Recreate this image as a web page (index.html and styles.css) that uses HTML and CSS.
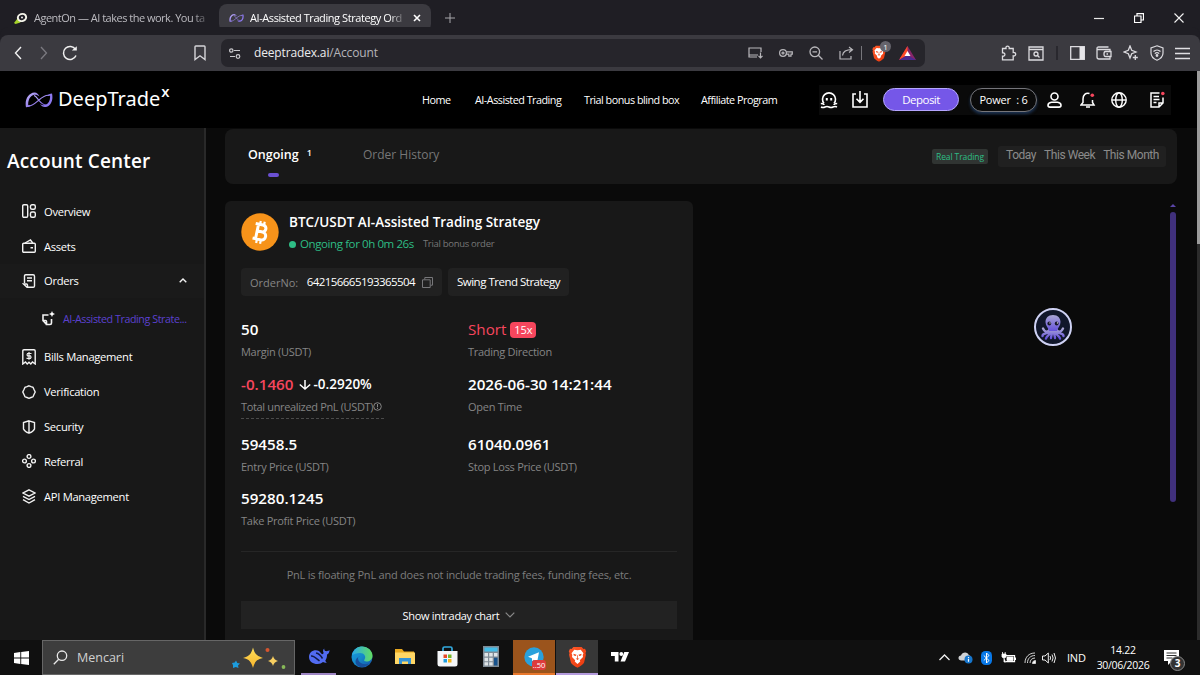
FILE: index.html
```
<!DOCTYPE html>
<html lang="en">

<head>
  <meta charset="UTF-8">
  <meta name="viewport" content="width=device-width, initial-scale=1.0">
  <title>AI-Assisted Trading Strategy Orders</title>
  <link rel="stylesheet" href="styles.css">
</head>

<body>
  <svg width="0" height="0" class="defs">
    <defs>
      <linearGradient id="loop" x1="0" y1="0" x2="1" y2="1">
        <stop offset="0" stop-color="#c9bcff" />
        <stop offset="1" stop-color="#6c50d8" />
      </linearGradient>
      <linearGradient id="edge" x1="0" y1="0" x2="1" y2="1">
        <stop offset="0" stop-color="#1b9de2" />
        <stop offset=".5" stop-color="#1489c9" />
        <stop offset="1" stop-color="#1650a8" />
      </linearGradient>
      <linearGradient id="edge-top" x1="0" y1="0" x2="1" y2="0">
        <stop offset="0" stop-color="#2aa9e8" />
        <stop offset="1" stop-color="#62dd62" />
      </linearGradient>
      <linearGradient id="brave" x1="0" y1="0" x2="1" y2="1">
        <stop offset="0" stop-color="#ff5a2a" />
        <stop offset="1" stop-color="#e9380c" />
      </linearGradient>
      <linearGradient id="gold" x1="0" y1="0" x2="0" y2="1">
        <stop offset="0" stop-color="#ffdf5a" />
        <stop offset="1" stop-color="#f7b42c" />
      </linearGradient>
      <linearGradient id="octo" x1="0" y1="0" x2="0" y2="1">
        <stop offset="0" stop-color="#aaa6d4" />
        <stop offset="1" stop-color="#6552dc" />
      </linearGradient>
      <symbol id="infinity" viewBox="0 0 28 16">
        <path d="M3 14C7 14.500 10.500 11 14 8s7.500-5.500 10.500-4.500M9 3.500C11 4 12 6 14 8.500s4.500 4.500 7.500 4.500" fill="none" stroke="url(#loop)" stroke-width="1.200" />
        <path d="M1 15.200C-.5 8 3 1 9.500.5 12 .5 13.500 2.500 14.500 4.500 12.500 2.800 10.500 2.500 8.500 3 5 4 3 8 3.200 13.300l3-.3C5 14.500 3 15.300 1 15.200z" fill="url(#loop)" />
        <path d="M27 1.500C28.500 8 26 14 20.500 15c-2.500.3-4-1.200-5.500-3 2 1.300 4 1.500 5.800.8C24 11.500 25.500 7.500 25 3.500L21.500 4C23 2.500 25 1.500 27 1.500z" fill="#8d79ef" />
      </symbol>
      <symbol id="lion" viewBox="0 0 20 24">
        <path d="M5.500 1h9l2 2.200 1.700-.2 1.300 3-.8 1.500.5 2-2 8.500c-.3 1.500-4.800 4.500-7.200 5.700C7.600 22.500 3.100 19.500 2.800 18L.8 9.500l.5-2L.5 6l1.300-3 1.700.2z" fill="url(#brave)" />
        <path d="M10 4.500 13.500 4l3 3.800-.8 2 .3 2.200-3.500 3.500.5 1.500L10 19.500 7 17l.5-1.500L4 12l.3-2.200-.8-2L6.500 4z" fill="#fff" />
        <path d="M5.500 8.500 9 9.500 8 11l-2-.7zM14.500 8.500 11 9.500l1 1.500 2-.7zM8 13.500h4l-2 1.800zM9.600 10h.8v4h-.8z" fill="#f04a1c" />
      </symbol>
    </defs>
  </svg>

  <!-- Browser tabs -->
  <div class="tab-strip">
    <div class="tab tab-idle">
      <svg class="tab-icon" width="15" height="14" viewBox="0 0 15 14"><path d="M1 12 4.500 7.500l3 4-5 1.500z" fill="#a7d42a" /><ellipse cx="9" cy="6.500" rx="4.200" ry="3.500" fill="none" stroke="#f4f4ea" stroke-width="2" transform="rotate(-18 9 6.500)" /><circle cx="9" cy="6.500" r="1" fill="#eee" /></svg>
      <span class="tab-text fade">AgentOn — AI takes the work. You ta</span>
    </div>
    <div class="tab tab-active">
      <svg class="tab-icon" width="15" height="10"><use href="#infinity" /></svg>
      <span class="tab-text fade">AI-Assisted Trading Strategy Ord</span>
      <svg class="tab-close" width="8" height="8" viewBox="0 0 8 8"><path d="m1 1 6 6M7 1 1 7" stroke="#fff" stroke-width="1.600" /></svg>
    </div>
    <svg class="tab-new" width="10" height="10" viewBox="0 0 10 10"><path d="M5 0v10M0 5h10" stroke="#a8a7ab" /></svg>
    <div class="window-buttons">
      <svg width="10" height="10" viewBox="0 0 10 10"><path d="M0 5.500h10" stroke="#e8e8e8" stroke-width="1.200" /></svg>
      <svg width="10" height="10" viewBox="0 0 10 10"><path d="M.5 3h6.500v6.500H.5zM3 3V.6h6.500V7H7" fill="none" stroke="#fff" stroke-width="1.200" /></svg>
      <svg width="10" height="10" viewBox="0 0 10 10"><path d="m.5.5 9 9M9.500.5l-9 9" stroke="#f3f3f3" stroke-width="1.100" /></svg>
    </div>
  </div>

  <!-- Browser toolbar -->
  <div class="toolbar">
    <svg class="nav-back" width="8" height="14" viewBox="0 0 8 14"><path d="M7 1 1.500 7 7 13" fill="none" stroke="#f2f2f2" stroke-width="1.400" /></svg>
    <svg class="nav-next" width="8" height="14" viewBox="0 0 8 14"><path d="m1 1 5.500 6L1 13" fill="none" stroke="#7b7a80" stroke-width="1.300" /></svg>
    <svg class="nav-reload" width="16" height="16" viewBox="0 0 16 16"><path d="M14 10.500A6.500 6.500 0 1 1 13.500 4.500" fill="none" stroke="#f0f0f0" stroke-width="1.500" /><path d="M9.800 5.500h5V1.200z" fill="#f0f0f0" /></svg>
    <svg class="nav-bookmark" width="12" height="16" viewBox="0 0 12 16"><path d="M1 1.800Q1 1 1.800 1h8.400q.8 0 .8.800V14.500L6 10.800 1 14.500z" fill="none" stroke="#d6d5d9" stroke-width="1.400" /></svg>
    <div class="address-bar">
      <svg width="12" height="11" viewBox="0 0 12 11" fill="none" stroke="#c9c8cc" stroke-width="1.200"><circle cx="2.300" cy="2.500" r="1.700" /><path d="M5 2.500h6M1 8.500h5" /><circle cx="9" cy="8.500" r="1.800" /></svg>
      <span class="url">deeptradex.ai<i>/Account</i></span>
      <div class="address-icons">
        <svg width="15" height="12" viewBox="0 0 15 12" fill="none" stroke="#b8b7bb" stroke-width="1.200"><path d="M13 5V1H1v9h8M1 8h9M12.500 5.500v5M10.500 8.800l2 2 2-2" /></svg>
        <svg width="14" height="10" viewBox="0 0 14 10" fill="none" stroke="#b8b7bb" stroke-width="1.200"><circle cx="4" cy="5" r="3.400" /><circle cx="4" cy="5" r="1" /><path d="M7.300 3.800H13.300v2.400h-1.300v2H9.800v-2H7.300" /></svg>
        <svg width="14" height="14" viewBox="0 0 14 14" fill="none" stroke="#b8b7bb" stroke-width="1.300"><circle cx="5.800" cy="5.800" r="4.800" /><path d="m9.300 9.300 4.200 4.200M3.500 5.800h4.600" /></svg>
        <svg width="15" height="14" viewBox="0 0 15 14" fill="none" stroke="#b8b7bb" stroke-width="1.200"><path d="M1 5v8h11v-3M3.500 9.500C4 5.500 7 3.700 13 3.700M10 1l3.500 2.700L10 6.500" /></svg>
        <span class="bar-split"></span>
        <span class="shield"><svg width="14" height="17"><use href="#lion" /></svg><b>1</b></span>
        <svg width="17" height="14" viewBox="0 0 17 14"><path d="M8.500 0 0 14h17z" fill="#87256b" /><path d="M8.500 0 0 14l8.500-5z" fill="#ff4a25" /><path d="M0 14h17L8.500 9z" fill="#4b2a91" /><path d="M8.500 5 5.500 10h6z" fill="#fff" /></svg>
      </div>
    </div>
    <div class="toolbar-icons">
      <svg width="16" height="16" viewBox="0 0 16 16" fill="none" stroke="#dcdbdf" stroke-width="1.300"><path d="M1.500 3.500H5C4.300.3 8.700.3 8.200 3.500h4v4c3.300-.5 3.300 3.800 0 3.300v4H1.500v-3.600c3.200.4 3.200-3.800 0-3.400z" /></svg>
      <svg width="16" height="15" viewBox="0 0 16 15" fill="none" stroke="#dcdbdf" stroke-width="1.300"><path d="M1 1h14v13H1zM1 3.500h14" /><circle cx="8" cy="8" r="2" /><path d="m9.500 9.500 2 2" /></svg>
      <span class="bar-split dark"></span>
      <svg width="15" height="14" viewBox="0 0 15 14"><path d="M.7.700h13.600v12.600H.7z" fill="none" stroke="#dcdbdf" stroke-width="1.300" /><path d="M9.500 1h5v12h-5z" fill="#e6e5e9" /></svg>
      <svg width="16" height="14" viewBox="0 0 16 14" fill="none" stroke="#dcdbdf" stroke-width="1.300"><path d="M14 5V3.500H2.500c-2 0-2-2.500 0-2.500H12.500M1 2v9q0 2 2 2h11v-2.500M9.500 5.500H15v5H9.500q-1.500 0-1.500-2.500t1.500-2.500zM10.500 8h1.500" /></svg>
      <svg width="16" height="16" viewBox="0 0 16 16" fill="none" stroke="#dcdbdf" stroke-width="1.300"><path d="M7 1 8.700 5.300 13 7 8.700 8.700 7 13 5.300 8.700 1 7 5.300 5.300zM12.300 10v5M9.800 12.500H14.800" /></svg>
      <svg width="14" height="16" viewBox="0 0 14 16" fill="none" stroke="#dcdbdf" stroke-width="1.200"><path d="M7 .8 13 3v5c0 4-3 6-6 7.200C4 14 1 12 1 8V3zM3.500 6.500c2-2 5-2 7 0M4.800 8.600c1.300-1.200 3.100-1.200 4.400 0" /><circle cx="7" cy="10.500" r=".8" fill="#dcdbdf" /></svg>
      <svg width="15" height="13" viewBox="0 0 15 13"><path d="M0 1.500h15M0 6.500h15M0 11.500h15" stroke="#e0dfe3" stroke-width="1.400" /></svg>
    </div>
  </div>

  <div class="viewport">
    <header class="site-header">
      <a class="logo" href="#">
        <svg width="28" height="16"><use href="#infinity" /></svg>
        <span class="logo-name">DeepTrade</span><sup>x</sup>
      </a>
      <nav class="main-nav">
        <a class="nav-home" href="#">Home</a>
        <a class="nav-trading" href="#">AI-Assisted Trading</a>
        <a class="nav-bonus" href="#">Trial bonus blind box</a>
        <a class="nav-affiliate" href="#">Affiliate Program</a>
      </nav>
      <div class="header-actions">
        <svg width="18" height="18" viewBox="0 0 18 18" fill="none" stroke="#fff" stroke-width="1.600"><path d="M4 12.500A6.500 6.500 0 1 1 14 12.500M.8 12.500c1.500 0 3 .2 3.200 1.500M17.200 12.500c-1.500 0-3 .2-3.200 1.500M1 16q2 1 4 0t4 0 4 0 4 0" /><path d="M6.800 7v2.500M11.200 7v2.500" stroke-width="2" /></svg>
        <svg class="download" width="16" height="17" viewBox="0 0 16 17" fill="none" stroke="#fff" stroke-width="1.600"><path d="M4 3H1v13h14V3h-3M8 0v11M4.500 7.800 8 11.300l3.500-3.500" /></svg>
        <button class="btn-deposit">Deposit</button>
        <button class="btn-power">Power&nbsp; : 6</button>
        <svg class="user" width="15" height="16" viewBox="0 0 15 16" fill="none" stroke="#fff" stroke-width="1.600"><circle cx="7.500" cy="4.500" r="3.500" /><path d="M4.500 10.300h6Q14 10.800 14 13.300q0 1.800-2 1.800H3q-2 0-2-1.800 0-2.500 3.500-3z" /></svg>
        <svg class="bell" width="16" height="16" viewBox="0 0 16 16" fill="none" stroke="#fff" stroke-width="1.500"><path d="M9.500 1.500C5.500.5 3 3 3 7v3.500L1 13h13l-1.500-2.500V8M6 15h4" /><circle cx="12.300" cy="3.200" r="1.800" fill="#f6465d" stroke="none" /></svg>
        <svg width="16" height="16" viewBox="0 0 16 16" fill="none" stroke="#fff" stroke-width="1.400"><circle cx="8" cy="8" r="7.200" /><ellipse cx="8" cy="8" rx="3.300" ry="7.200" /><path d="M1 8h14" /></svg>
        <svg width="15" height="18" viewBox="0 0 15 18" fill="none" stroke="#fff" stroke-width="1.500"><path d="M9.500 2H1v14h8l4-4V6.500M9 16v-4h4M3.500 5.500h5.500M3.500 8.500h6" /><path d="M3.500 11.500h3" /><circle cx="12.800" cy="2.500" r="1.800" fill="#f6465d" stroke="none" /></svg>
      </div>
    </header>

    <div class="page">
      <aside class="sidebar">
        <h1 class="sidebar-title">Account Center</h1>
        <ul class="menu">
          <li><svg width="14" height="14" viewBox="0 0 14 14"><rect x=".7" y=".7" width="5" height="12.600" rx="1.200" /><rect x="8.500" y=".7" width="4.800" height="4.500" rx="1.500" /><rect x="8.500" y="8" width="4.800" height="5.300" rx="1.500" /></svg><span>Overview</span></li>
          <li><svg width="14" height="14" viewBox="0 0 14 14"><rect x=".7" y="4.300" width="12.600" height="9" rx="1" /><path d="M3 4 8.500 1l2.200 3M8.500 8.800h2.500" /></svg><span>Assets</span></li>
          <li class="open"><svg width="14" height="14" viewBox="0 0 14 14"><path d="M2.500 9V2q0-1.300 1.300-1.300H11q1.500 0 1.500 1.500V12q0 1.300-1.300 1.300H5L1.500 10h3q1 0 1 1v2M5 4h5M5 6.800h5" /></svg><span>Orders</span>
            <svg class="caret" width="8" height="5" viewBox="0 0 8 5"><path d="m.7 4.300 3.300-3.300 3.300 3.300" /></svg></li>
          <li class="sub"><svg width="14" height="15" viewBox="0 0 14 15"><path d="M7.500 4H2v5.500h2.500q1 0 1 1V13.500H9q1.500 0 1.500-1.500V8M2 9.500l3.500 4" stroke-width="1.600" /><path d="m11 0 .9 2.100 2.100.9-2.100.9L11 6l-.9-2.100L8 3l2.100-.9z" fill="#fff" stroke="none" /></svg><span>AI-Assisted Trading Strate...</span></li>
          <li><svg width="14" height="16" viewBox="0 0 14 16"><path d="M.8 15V2Q.8.800 2 .8h10q1.200 0 1.200 1.200v13l-2.700-2-1.700 2-1.800-1.700L5.200 15l-1.700-2z" /><path d="M9.500 4.500h-4q-1 1.600 0 2.400h3q1.200 1.200 0 2.400h-4M7 3v7.800" stroke-width="1.200" /></svg><span>Bills Management</span></li>
          <li><svg width="14" height="14" viewBox="0 0 14 14"><path d="M7 .8 9 1.600l2 .7.9 2L13.200 7l-1.200 2.500-1 2.300-2 .7-2 .8-2-.8-2-.7-1-2.300L.8 7 2.100 4.300l.9-2 2-.7z" /></svg><span>Verification</span></li>
          <li><svg width="14" height="14" viewBox="0 0 14 14"><path d="M7 .8 12.500 2.500V9Q11.500 11.500 7 13.200 2.500 11.500 1.500 9V2.500zM7 1v12" /></svg><span>Security</span></li>
          <li><svg width="14" height="14" viewBox="0 0 14 14"><circle cx="7" cy="2.500" r="1.900" /><circle cx="7" cy="11.500" r="1.900" /><circle cx="2.500" cy="7" r="1.900" /><circle cx="11.500" cy="7" r="1.900" /></svg><span>Referral</span></li>
          <li><svg width="14" height="15" viewBox="0 0 14 15"><path d="m7 .8 6 3.200-6 3.200L1 4zM1 7.300l6 3.200 6-3.200M1 10.700l6 3.300 6-3.300" /></svg><span>API Management</span></li>
        </ul>
      </aside>

      <main class="content">
        <section class="tabs-panel">
          <div class="order-tab active"><span>Ongoing</span><sup>1</sup></div>
          <div class="order-tab history">Order History</div>
          <span class="badge-real">Real Trading</span>
          <div class="range"><span>Today</span><span>This Week</span><span>This Month</span></div>
        </section>

        <div class="orders">
          <article class="order-card">
            <div class="order-head">
              <svg width="38" height="38" viewBox="0 0 38 38"><circle cx="19" cy="19" r="18.700" fill="#f7931a" /><g transform="rotate(12 19 19)" fill="none" stroke="#fff" stroke-width="3"><path d="M13 11.500h7.500c4.800 0 4.800 7 0 7H16M16 18.500h5.500c5.200 0 5.200 8 0 8H13M16 11.500v15" /><path d="M17.500 8v4M21.500 8v4M17.500 26v4.500M21.500 26v4.500" stroke-width="2.200" /></g></svg>
              <div>
                <h2 class="order-title">BTC/USDT AI-Assisted Trading Strategy</h2>
                <div class="order-state"><i class="dot"></i><span class="running">Ongoing for 0h 0m 26s</span><span class="bonus">Trial bonus order</span></div>
              </div>
            </div>

            <div class="chips">
              <div class="chip chip-no"><span class="chip-label">OrderNo:</span><span class="chip-id">642156665193365504</span><svg width="11" height="11" viewBox="0 0 11 11" fill="none" stroke="#77777a"><path d="M.5 2.800h7.700v7.700H.5zM2.800 2.500v-2h7.700v7.700h-2" /></svg></div>
              <div class="chip chip-strategy">Swing Trend Strategy</div>
            </div>

            <dl class="stats">
              <div><dd>50</dd><dt>Margin (USDT)</dt></div>
              <div><dd class="short">Short<b>15x</b></dd><dt>Trading Direction</dt></div>
              <div class="pnl"><dd><span class="loss">-0.1460</span><svg width="12" height="12" viewBox="0 0 12 12"><path d="M6 1v9M.8 5.500 6 10l5.200-4.500" fill="none" stroke="#fff" stroke-width="1.500" /></svg><span class="percent">-0.2920%</span></dd><dt><span>Total unrealized PnL (USDT)</span><svg width="9" height="9" viewBox="0 0 9 9" fill="none" stroke="#858585"><circle cx="4.500" cy="4.500" r="3.800" /><path d="M4.500 2v3.300M4.500 6v1" /></svg></dt></div>
              <div><dd>2026-06-30 14:21:44</dd><dt>Open Time</dt></div>
              <div><dd>59458.5</dd><dt>Entry Price (USDT)</dt></div>
              <div><dd>61040.0961</dd><dt>Stop Loss Price (USDT)</dt></div>
              <div><dd>59280.1245</dd><dt>Take Profit Price (USDT)</dt></div>
            </dl>

            <p class="note">PnL is floating PnL and does not include trading fees, funding fees, etc.</p>
            <button class="btn-chart"><span>Show intraday chart</span><svg width="10" height="6" viewBox="0 0 10 6"><path d="m.7.700 4.300 4.300L9.300.700" fill="none" stroke="#8a8a8a" stroke-width="1.200" /></svg></button>
          </article>
          <div class="list-scroll"><i class="arrow"></i><i class="thumb"></i></div>
        </div>
      </main>
    </div>

    <div class="page-scroll"></div>
    <div class="assistant">
      <svg width="26" height="27" viewBox="0 0 26 27">
        <g fill="none" stroke="url(#octo)" stroke-width="2.400" stroke-linecap="round"><path d="M10 15c-2 4-5 3.500-7-.5M9 17.500c-2 3-6.500 1.500-6.500 4.500M10.500 18c0 3-3.500 3-4.500 6.500M12 18c0 3-1 4-1 6M14 18c0 3 1 4 1 6M15.500 18c0 3 3.500 3 4.500 6.500M17 17.500c2 3 6.500 1.500 6.500 4.500M16 15c2 4 5 3.500 7-.5" /></g>
        <path d="M13 1c5 0 7.500 3.300 7.500 7 0 3.500-2.500 5.500-3.500 9h-8C8 13.500 5.500 11.500 5.500 8 5.500 4.300 8 1 13 1z" fill="url(#octo)" />
        <circle cx="9.300" cy="9.500" r="1.900" fill="#17172a" /><circle cx="16.700" cy="9.500" r="1.900" fill="#17172a" /><circle cx="10" cy="8.900" r=".6" fill="#fff" /><circle cx="17.400" cy="8.900" r=".6" fill="#fff" />
      </svg>
    </div>
  </div>

  <!-- Windows taskbar -->
  <footer class="taskbar">
    <div class="task-start"><svg width="15" height="14" viewBox="0 0 15 14" fill="#fff"><path d="M0 2l6.300-.9v5.400H0zM7.200 1 15 0v6.500H7.200zM0 7.400h6.300v5.500L0 12zM7.200 7.400H15V14l-7.800-1z" /></svg></div>
    <div class="task-search">
      <svg width="15" height="15" viewBox="0 0 15 15" fill="none" stroke="#e8e8e8" stroke-width="1.300"><circle cx="9" cy="5.700" r="4.700" /><path d="M5.700 9.300.8 14.200" /></svg>
      <span>Mencari</span>
      <svg class="sparkles" width="56" height="24" viewBox="0 0 56 24"><path d="M22 1.500c1.800 6.500 3.500 8.500 10 10.500-6.500 1.500-8.200 3.500-10 10-1.800-6.500-3.500-8.500-10-10 6.500-2 8.200-4 10-10.500z" fill="url(#gold)" /><path d="M42 10q1 4 5 5-4 1-5 5-1-4-5-5 4-1 5-5z" fill="#f8cf61" /><path d="m5 14.500 1.300 2.500 2.700.5-2 2 .5 2.500-2.700-1L2 22v-2.800L1 17l2.700-.5z" fill="#1c9cdd" /><circle cx="36.500" cy="4" r="2" fill="#d6552f" /><circle cx="52.500" cy="21" r="1.900" fill="#87b958" /></svg>
    </div>
    <div class="task-app running-app"><svg width="22" height="17" viewBox="0 0 22 17"><path d="M11 3C6 1 1 4 1 9c0 4.500 4 7 8.500 7 2.500 0 4-.8 5.500-2 1.200.7 2.200 1 3.800.7-.8-.7-1.200-1.200-1.500-2C19 10 19 8 19 6.500 20.500 6 21.500 4.500 21.500 2c-1.500 1.500-3 1.200-4.300 1-.8-.8-1-1.500-1-2.500-1.400 1.200-1.500 3-.5 4.500-.5.8-1 1.200-1.700 1.200z" fill="#526cf2" /><path d="M3 8c3-.5 6 3 8.500 5M8 5c3 .5 5 3 6.500 5.500" fill="none" stroke="#111a46" stroke-width="1.500" /></svg></div>
    <div class="task-app"><svg width="22" height="22" viewBox="0 0 22 22"><circle cx="11" cy="11" r="10.500" fill="url(#edge)" /><path d="M1 9C2.500 3 7 .5 11 .5c6 0 10.500 4.500 10.500 9 0 4-3 6-6 6-2 0-3-.8-2-2 2-3-.2-6.500-4.500-6.500-3.500 0-6.500 1.500-8 2z" fill="url(#edge-top)" /><path d="M7 12c0 4.500 5 7.500 11 5.500-3 4-9 5-12.500 1-2-2.500-1-6.500 3.500-8.500-1 .3-2 1.200-2 2z" fill="#174f9d" /></svg></div>
    <div class="task-app"><svg width="20" height="17" viewBox="0 0 20 17"><path d="M0 1h7l2 2.500h10V7H0z" fill="#e9a91f" /><path d="M0 4.500h20V16H0z" fill="#ffd765" /><path d="M4 16V10h12v6h-3v-2.500H7V16z" fill="#3594d7" /></svg></div>
    <div class="task-app"><svg width="21" height="21" viewBox="0 0 21 21"><path d="M6 6V2.500Q6 1 7.500 1h6Q15 1 15 2.500V6" fill="none" stroke="#32a9de" stroke-width="1.700" /><path d="M.5 5h20v13q0 2.500-2.500 2.500H3Q.5 20.500.5 18z" fill="#f5f7f9" /><path d="M6.500 8.500H10V12H6.500z" fill="#e74a28" /><path d="M11 8.500h3.500V12H11z" fill="#75b72a" /><path d="M6.500 13H10v3.500H6.500z" fill="#1e9ee0" /><path d="M11 13h3.500v3.500H11z" fill="#f6b51b" /></svg></div>
    <div class="task-app"><svg width="16" height="21" viewBox="0 0 16 21"><path d="M0 0h16v21H0z" fill="#7f8b95" /><path d="M1.500 1.500h13v4h-13z" fill="#43bde8" /><path d="M1.500 7h3.500v3.500H1.500zM6.200 7h3.500v3.500H6.200zM11 7h3.500v3.500H11zM1.500 11.700h3.500v3.500H1.500zM6.200 11.700h3.500v3.500H6.200zM1.500 16.300h3.500v3.200H1.500zM6.200 16.300h3.500v3.200H6.200z" fill="#dfe4e7" /><path d="M11 11.700h3.500v7.800H11z" fill="#17528c" /></svg></div>
    <div class="task-app telegram"><svg width="20" height="20" viewBox="0 0 20 20"><circle cx="10" cy="10" r="9.700" fill="#2aa1dc" /><path d="m4 9.700 11-4.500-1.900 10-3.300-2.500-1.600 1.600-.3-3z" fill="#fff" /></svg><b>..50</b></div>
    <div class="task-app brave"><svg width="19" height="22"><use href="#lion" /></svg></div>
    <div class="task-app"><svg width="18" height="10" viewBox="0 0 18 10" fill="#fff"><path d="M0 0h7.500v9.500H3.800V4H0zM13.300 0H18l-4 9.500H9.500z" /><circle cx="10.300" cy="2" r="1.900" /></svg></div>
    <div class="tray">
      <svg class="t-up" width="11" height="7" viewBox="0 0 11 7"><path d="m.5 6 5-5 5 5" fill="none" stroke="#eee" stroke-width="1.300" /></svg>
      <svg class="t-cloud" width="15" height="13" viewBox="0 0 15 13"><path d="M3.500 9.500C-.5 9.500-.3 4.500 3 4.500 4 .5 10 .3 10.800 4.200c3 .3 3 5.300 0 5.300z" fill="#d0d2d4" /><circle cx="10.500" cy="8.500" r="4" fill="#1676cd" /><path d="M10.500 6v1M10.500 7.800v3" stroke="#fff" stroke-width="1.200" /></svg>
      <svg class="t-bt" width="11" height="14" viewBox="0 0 11 14"><rect width="11" height="14" rx="4.500" fill="#0878e8" /><path d="m2.800 4.500 5.200 5L5.500 12V2L8 4.500l-5.200 5" fill="none" stroke="#fff" /></svg>
      <svg class="t-battery" width="15" height="12" viewBox="0 0 15 12"><path d="M4 3.700h9.500v6H5M14.500 5.500v2.500" fill="none" stroke="#fff" stroke-width="1.300" /><path d="M6 5h6v3.500H6zM1 2h4v3Q3 7 1 5zM1.500 0v2M4.200 0v2M3 6v4h2" fill="#fff" stroke="#fff" stroke-width=".8" /></svg>
      <svg class="t-wifi" width="12" height="12" viewBox="0 0 12 12" fill="none" stroke="#d3d3d3"><path d="M1 11C1 5 5 1 11 1M3.500 11c0-4.500 3-7.500 7.500-7.500M6 11c0-3 2-5 5-5" /><path d="M8.500 11.500Q8.500 8.500 11.500 8.500v3z" fill="#fff" /></svg>
      <svg class="t-sound" width="14" height="12" viewBox="0 0 14 12" fill="none" stroke="#eee"><path d="M.5 4H3l3.300-3v10L3 8H.5zM8 4q1.200 2 0 4M10 2.500q2.200 3.500 0 7M12 1q3 5 0 10" /></svg>
      <span class="t-lang">IND</span>
      <div class="clock"><span>14.22</span><span>30/06/2026</span></div>
      <div class="t-notice"><svg width="15" height="15" viewBox="0 0 15 15"><path d="M0 0h15v11H8l-4 4v-4H0z" fill="#fff" /><path d="M2.500 3h10M2.500 5.500h10M2.500 8h6" stroke="#333" /></svg><b>3</b></div>
    </div>
  </footer>
</body>

</html>
```

FILE: styles.css
```
*,
*::before,
*::after {
  box-sizing: border-box;
}

:root {
  /* COLORS */
  --purple: #7557e8;
  --red: #f6465d;
  --green: #2ebd85;
  --panel: #181818;
  --chip: #212121;
  --muted: #858585;

  --ff-ui: "Open Sans", "Noto Sans", sans-serif;
}

body,
h1,
h2,
p,
ul,
dl,
dd {
  margin: 0;
  padding: 0;
}

body {
  display: flex;
  flex-direction: column;
  width: 1200px;
  height: 675px;
  overflow: hidden;
  font-family: var(--ff-ui);
  font-size: 11px;
  line-height: 1;
  white-space: nowrap;
  color: #fff;
  background: #0a0a0a;
}

svg {
  display: block;
  flex: none;
}

.defs {
  position: absolute;
}

a {
  color: inherit;
  text-decoration: none;
}

button {
  padding: 0;
  border: 0;
  font: inherit;
  color: inherit;
}

/*** BROWSER ***/
.tab-strip {
  display: flex;
  align-items: center;
  height: 35px;
  background: #1f1e24;
}

.tab {
  display: flex;
  align-items: center;
  height: 28px;
}

.tab-idle {
  width: 219px;
  padding-left: 13px;
  color: #bcbbc0;
}

.tab-idle .tab-text {
  width: 174px;
  letter-spacing: -0.5px;
}

.tab-icon {
  margin-right: 6px;
}

.tab-text {
  overflow: hidden;
  line-height: 18px;
}

.tab-active {
  width: 212px;
  padding-left: 10px;
  border-radius: 8px;
  background: #3b3a40;
}

.tab-active .tab-text {
  width: 153px;
  letter-spacing: -0.42px;
}

.fade {
  mask-image: linear-gradient(90deg, #000 91%, rgba(0, 0, 0, 0.2));
}

.tab-close {
  margin-left: 10px;
}

.tab-new {
  margin-left: 14px;
}

.window-buttons {
  display: flex;
  gap: 30px;
  margin-left: auto;
  padding-right: 16px;
}

.toolbar {
  display: flex;
  align-items: center;
  height: 36px;
  padding: 0 10px 0 14px;
  border-radius: 8px 8px 0 0;
  background: #3b3a40;
  box-shadow: 0 -8px 0 0 #1f1e24;
}

.nav-next {
  margin-left: 18px;
}

.nav-reload {
  margin-left: 14px;
}

.nav-bookmark {
  margin-left: 116px;
}

.address-bar {
  display: flex;
  align-items: center;
  width: 704px;
  height: 28px;
  margin-left: 15px;
  padding: 0 9px 0 8px;
  border-radius: 7px;
  background: #26252b;
}

.url {
  margin-left: 13px;
  font-size: 12px;
  letter-spacing: -0.15px;
  color: #ececee;
}

.url i {
  font-style: normal;
  color: #b5b4b9;
}

.address-icons {
  display: flex;
  align-items: center;
  gap: 16px;
  margin-left: auto;
}

.bar-split {
  width: 1px;
  height: 14px;
  margin: 0 -6px 0 -9px;
  background: #77767c;
}

.bar-split.dark {
  width: 2px;
  margin: 0 1px;
  background: #29282e;
}

.shield {
  position: relative;
  margin-right: -3px;
}

.shield b {
  position: absolute;
  top: -4px;
  left: 8px;
  width: 11px;
  height: 11px;
  border-radius: 50%;
  font-size: 8px;
  line-height: 11px;
  text-align: center;
  font-weight: 400;
  background: #65646c;
}

.toolbar-icons {
  display: flex;
  align-items: center;
  gap: 11px;
  margin-left: auto;
}

/*** SITE ***/
.viewport {
  position: relative;
  flex: none;
  height: 569px;
}

.site-header {
  display: flex;
  align-items: center;
  height: 57px;
  padding-left: 25px;
  background: #000;
}

.logo {
  display: flex;
  align-items: center;
  width: 397px;
}

.logo-name {
  margin: -2px 0 0 5px;
  font-family: "Noto Sans", sans-serif;
  font-size: 20px;
}

.logo sup {
  margin: -17px 0 0 1px;
  font-size: 15px;
  font-weight: 600;
}

.main-nav {
  display: flex;
  width: 397px;
  padding-top: 2px;
  font-size: 10.800px;
  font-weight: 500;
  letter-spacing: -0.5px;
}

.nav-home {
  width: 53px;
}

.nav-trading {
  width: 109px;
}

.nav-bonus {
  width: 117px;
}

.header-actions {
  display: flex;
  align-items: center;
  width: 352px;
  height: 30px;
  padding-left: 1px;
  background: #0a0a0a;
}

.header-actions svg {
  margin-right: 14px;
}

.header-actions .download {
  margin-right: 15px;
}

.btn-deposit {
  width: 76px;
  height: 23px;
  border: 1px solid #b5a6ff;
  border-radius: 12px;
  font-size: 11.500px;
  letter-spacing: -0.5px;
  background: var(--purple);
}

.btn-power {
  width: 67px;
  height: 24px;
  margin: 0 10px 0 11px;
  border: 1.500px solid #75757a;
  border-radius: 12px;
  letter-spacing: -0.2px;
  background: #0a0a0a;
  box-shadow: 0 2px 3px #1b3150;
}

.header-actions .user {
  margin-right: 18px;
}

.header-actions .bell {
  margin-right: 15px;
}

.header-actions svg:last-child {
  margin: 0 0 0 9px;
}

.page {
  display: flex;
  height: 512px;
}

.sidebar {
  width: 206px;
  border-right: 2px solid #292929;
  background: var(--panel);
}

.sidebar-title {
  padding: 20px 0 0 7px;
  font-size: 19px;
  font-weight: 600;
  line-height: 26px;
  letter-spacing: 0.15px;
}

.menu {
  padding-top: 20px;
  list-style: none;
  font-size: 11.200px;
  letter-spacing: -0.3px;
}

.menu li {
  display: flex;
  align-items: center;
  height: 34.800px;
  padding-left: 22px;
}

.menu svg {
  margin-right: 8px;
  fill: none;
  stroke: #f2f2f2;
  stroke-width: 1.400;
}

.menu .open {
  background: #1a1a1a;
}

.menu .caret {
  margin: 0 17px 0 auto;
}

.menu .sub {
  height: 41.200px;
  padding-left: 41px;
  font-size: 10.700px;
  letter-spacing: -0.42px;
  color: #5b41cf;
}

.content {
  flex: 1;
  padding: 1px 0 0 19px;
  background: #0a0a0a;
}

.tabs-panel {
  display: flex;
  width: 952px;
  height: 55px;
  padding: 0 11px 0 23px;
  border-radius: 8px;
  background: var(--panel);
}

.order-tab {
  position: relative;
  padding-top: 20px;
  font-size: 12.500px;
}

.order-tab.active {
  display: flex;
  width: 115px;
  font-weight: 600;
}

.order-tab.active::after {
  content: "";
  position: absolute;
  top: 44px;
  left: 20px;
  width: 11px;
  height: 4px;
  border-radius: 2px;
  background: #6b50d2;
}

.order-tab sup {
  margin: -1px 0 0 8px;
  font-size: 9px;
  line-height: 10px;
}

.order-tab.history {
  font-size: 12px;
  color: #777;
}

.badge-real {
  width: 56px;
  height: 15px;
  margin: 20px 10px 0 auto;
  border-radius: 2px;
  font-size: 8.500px;
  line-height: 15px;
  text-align: center;
  letter-spacing: -0.1px;
  color: var(--green);
  background: #303432;
}

.range {
  display: flex;
  gap: 8px;
  width: 168px;
  height: 21px;
  margin-top: 17px;
  padding-left: 8px;
  border-radius: 3px;
  font-family: Roboto, sans-serif;
  font-size: 12px;
  line-height: 19px;
  letter-spacing: -0.45px;
  color: #8b8b8b;
  background: #202020;
}

.orders {
  display: flex;
  height: 439px;
  margin-top: 17px;
}

.order-card {
  width: 468px;
  padding: 12px 16px 0;
  border-radius: 6px 6px 0 0;
  background: var(--panel);
}

.order-head {
  display: flex;
  gap: 10px;
  height: 55px;
}

.order-title {
  font-size: 13.500px;
  font-weight: 600;
  line-height: 19px;
}

.order-state {
  display: flex;
  align-items: center;
  height: 24px;
}

.dot {
  width: 7px;
  height: 7px;
  margin-right: 4px;
  border-radius: 50%;
  background: var(--green);
}

.running {
  font-size: 11.500px;
  letter-spacing: -0.4px;
  color: var(--green);
}

.bonus {
  margin-left: 9px;
  font-size: 9.500px;
  letter-spacing: -0.3px;
  color: #777;
}

.chips {
  display: flex;
  gap: 6px;
}

.chip {
  display: flex;
  align-items: center;
  height: 28px;
  padding: 0 9px;
  border-radius: 4px;
  background: var(--chip);
}

.chip-no {
  width: 201px;
}

.chip-label {
  width: 57px;
  color: var(--muted);
}

.chip-id {
  width: 116px;
  font-size: 11.500px;
  letter-spacing: -0.55px;
}

.chip-strategy {
  width: 121px;
  font-size: 11.500px;
  letter-spacing: -0.5px;
}

.stats {
  display: grid;
  grid-template-columns: 227px 1fr;
  grid-template-rows: 55px 60px 54px 62px;
  margin-top: 24px;
}

.stats dd {
  display: flex;
  align-items: center;
  height: 20px;
  font-size: 15.200px;
  font-weight: 600;
}

.stats dt {
  line-height: 24px;
  letter-spacing: -0.27px;
  color: var(--muted);
}

.stats .short {
  font-weight: 400;
  color: var(--red);
}

.short b {
  width: 26px;
  margin-left: 4px;
  border-radius: 4px;
  font-size: 11px;
  font-weight: 500;
  line-height: 16px;
  text-align: center;
  color: #fff;
  background: var(--red);
}

.loss {
  color: var(--red);
}

.pnl dd svg {
  margin: 0 2px 0 6px;
}

.percent {
  font-size: 13.500px;
}

.pnl dt {
  display: flex;
  align-items: center;
  width: 143px;
  height: 24px;
  letter-spacing: -0.35px;
  border-bottom: 1px dashed #4a4a4a;
}

.note {
  padding-top: 16px;
  border-top: 1px solid #262626;
  line-height: 14px;
  text-align: center;
  letter-spacing: -0.22px;
  color: #7d7d7d;
}

.btn-chart {
  display: flex;
  align-items: center;
  justify-content: center;
  gap: 6px;
  width: 100%;
  height: 28px;
  margin-top: 19px;
  letter-spacing: -0.3px;
  background: #222;
}

.list-scroll {
  margin: 3px 0 0 477px;
}

.list-scroll i {
  display: block;
}

.arrow {
  width: 6px;
  border: 3px solid transparent;
  border-top: 0;
  border-bottom-color: #5b45a8;
}

.thumb {
  width: 6px;
  height: 290px;
  margin-top: 5px;
  border-radius: 3px;
  background: #40307c;
}

.page-scroll {
  position: absolute;
  top: 0;
  right: 0;
  width: 3px;
  height: 100%;
  background: linear-gradient(#9b9b9b 173px, #2b2b2b 173px);
}

.assistant {
  position: absolute;
  top: 237px;
  left: 1034px;
  display: grid;
  place-items: center;
  width: 38px;
  height: 38px;
  border: 2px solid #cfd2f4;
  border-radius: 50%;
  background: #11172b;
}

/*** TASKBAR ***/
.taskbar {
  display: flex;
  height: 35px;
  background: #101010;
}

.task-start {
  display: grid;
  place-items: center;
  width: 42px;
}

.task-search {
  display: flex;
  align-items: center;
  width: 253px;
  padding-left: 10px;
  border: 1px solid #666;
  font-size: 12.500px;
  color: #d0d0d0;
  background: #3d3d3d;
}

.task-search span {
  margin: 2px 0 0 9px;
}

.sparkles {
  margin: 0 7px 0 auto;
}

.task-app {
  position: relative;
  display: grid;
  place-items: center;
  width: 43px;
  border-bottom: 2px solid transparent;
}

.task-search + .task-app {
  width: 35px;
  margin: 0 4px 0 6px;
}

.running-app {
  border-color: #9e86c4;
}

.telegram {
  width: 42px;
  margin: 0 1px;
  border-color: #e9782c;
  background: #9b541c;
}

.telegram b {
  position: absolute;
  top: 20px;
  left: 19px;
  width: 14px;
  border-radius: 3px;
  font-size: 7.500px;
  font-weight: 400;
  line-height: 10px;
  text-align: center;
  background: #df3c3c;
}

.brave {
  width: 42px;
  border-color: #b49bdd;
  background: #373737;
}

.tray {
  display: flex;
  align-items: center;
  margin-left: auto;
  padding-right: 14px;
}

.t-cloud {
  margin-left: 8px;
}

.t-bt {
  margin-left: 8px;
}

.t-battery {
  margin-left: 9px;
}

.t-wifi {
  margin-left: 8px;
}

.t-sound {
  margin-left: 6px;
}

.t-lang {
  width: 18px;
  margin-left: 11px;
  letter-spacing: -0.2px;
}

.clock {
  display: flex;
  flex-direction: column;
  align-items: center;
  gap: 5px;
  width: 52px;
  margin-left: 12px;
  font-size: 10.500px;
  letter-spacing: -0.3px;
}

.t-notice {
  position: relative;
  margin-left: 15px;
  padding-right: 7px;
}

.t-notice b {
  position: absolute;
  top: 6px;
  left: 6px;
  width: 15px;
  height: 15px;
  border: 1px solid #888;
  border-radius: 50%;
  font-size: 10px;
  line-height: 13px;
  text-align: center;
  background: #333;
}
```
